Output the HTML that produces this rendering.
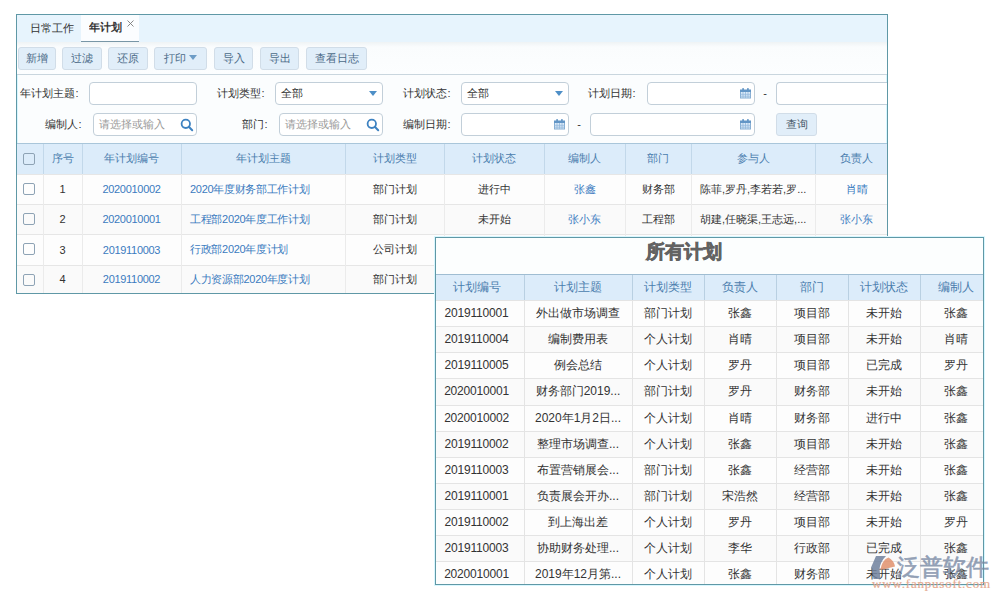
<!DOCTYPE html>
<html><head><meta charset="utf-8">
<style>
*{box-sizing:border-box;margin:0;padding:0}
html,body{width:1000px;height:600px;overflow:hidden;background:#fff;font-family:"Liberation Sans",sans-serif;position:relative}
.a{position:absolute}
.c{position:absolute;display:flex;align-items:center;justify-content:center;white-space:nowrap;overflow:hidden}
.l{justify-content:flex-start}
#p1{left:16px;top:14px;width:872px;height:280px;border:1px solid #5b9bab;background:#f8fcff;overflow:hidden}
.btn{position:absolute;top:47px;height:23px;padding-bottom:1px;border:1px solid #d1dde8;border-radius:3px;background:#e1eef9;color:#4c6b88;font-size:11px;display:flex;align-items:center;justify-content:center}
.lab{position:absolute;font-size:11px;color:#333;white-space:nowrap;display:flex;align-items:center;justify-content:flex-end}
.inp{position:absolute;height:23px;border:1px solid #c2cfd9;border-radius:4px;background:#fff;font-size:11px;color:#333;display:flex;align-items:center;padding-left:5px;white-space:nowrap}
.ph{color:#999}
.hd{font-size:11px;color:#4a7cad}
.bd{font-size:11px;color:#333}
.bl{color:#3b7bbf}
.num{letter-spacing:-0.3px}
.cb{position:absolute;width:12px;height:12px;border:1px solid #8ea3b5;border-radius:2px;background:transparent}
#p2{left:435px;top:237px;width:549px;height:347px;border:1px solid #5b9bab;background:#fff;overflow:hidden}
.h2{font-size:12px;color:#4a7cad}
.b2{font-size:12px;color:#333}
.num2{letter-spacing:-0.2px}
</style></head><body>

<div class="a" style="left:16px;top:14px;width:872px;height:280px;border:1px solid #5f98a6;background:#fbfdfe"></div>
<div class="a" style="left:17px;top:15px;width:870px;height:278px;border:1px solid #d6f6ff"></div>
<div class="a" style="left:17px;top:15px;width:870px;height:27px;background:#e7f4fd"></div>
<div class="c" style="left:17px;top:15px;width:69px;height:26px;font-size:11px;color:#333">日常工作</div>
<div class="a" style="left:81px;top:15px;width:58px;height:27px;background:#fbfdff;border-bottom:1px solid #7896a6"></div>
<div class="c" style="left:89px;top:14px;width:33px;height:26px;font-size:11px;color:#333;font-weight:bold">年计划</div>
<svg class="a" style="left:127px;top:20px" width="7" height="7" viewBox="0 0 7 7"><path d="M0.5 0.5L6.5 6.5M6.5 0.5L0.5 6.5" stroke="#7a7a7a" stroke-width="0.9"/></svg>
<div class="a" style="left:17px;top:42px;width:870px;height:32px;background:linear-gradient(#eff3f5,#fafcfd 5px,#fcfeff)"></div>
<div class="a" style="left:17px;top:74px;width:870px;height:1px;background:#c9d6de"></div>
<div class="btn" style="left:18px;width:38px">新增</div>
<div class="btn" style="left:62px;width:40px">过滤</div>
<div class="btn" style="left:108px;width:40px">还原</div>
<div class="btn" style="left:154px;width:53px;justify-content:flex-start;padding-left:9px">打印<span style="display:inline-block;width:0;height:0;border-left:4px solid transparent;border-right:4px solid transparent;border-top:5px solid #6d9cc6;margin-left:3px;margin-top:-1px"></span></div>
<div class="btn" style="left:214px;width:39px">导入</div>
<div class="btn" style="left:260px;width:39px">导出</div>
<div class="btn" style="left:306px;width:61px">查看日志</div>
<div class="lab" style="left:-21.5px;width:100px;top:81.5px;height:23px">年计划主题:</div>
<div class="inp" style="left:89px;width:108px;top:82px"></div>
<div class="lab" style="left:164.5px;width:100px;top:81.5px;height:23px">计划类型:</div>
<div class="inp" style="left:275px;width:108px;top:82px">全部<span class="a" style="right:5px;top:8px;width:0;height:0;border-left:4px solid transparent;border-right:4px solid transparent;border-top:5px solid #4e8fc7"></span></div>
<div class="lab" style="left:350.5px;width:100px;top:81.5px;height:23px">计划状态:</div>
<div class="inp" style="left:461px;width:108px;top:82px">全部<span class="a" style="right:5px;top:8px;width:0;height:0;border-left:4px solid transparent;border-right:4px solid transparent;border-top:5px solid #4e8fc7"></span></div>
<div class="lab" style="left:535.5px;width:100px;top:81.5px;height:23px">计划日期:</div>
<div class="inp" style="left:647px;width:108px;top:82px"><svg class="a" style="right:3px;top:4px" width="11" height="12" viewBox="0 0 11 12"><rect x="0.5" y="3.5" width="10" height="7.5" fill="#dcebf9" stroke="#86aed3" stroke-width="1"/><rect x="0" y="2.5" width="11" height="2.5" fill="#6396c6"/><rect x="2.2" y="1" width="1.8" height="2.5" rx="0.8" fill="#6396c6"/><rect x="7" y="1" width="1.8" height="2.5" rx="0.8" fill="#6396c6"/><path d="M3 5V11M5.5 5V11M8 5V11M0.5 7.3H10.5M0.5 9.2H10.5" stroke="#94b9dc" stroke-width="0.8"/></svg></div>
<div class="c" style="left:760px;top:81px;width:10px;height:23px;font-size:11px;color:#333">-</div>
<div class="inp" style="left:776px;width:111px;top:82px;border-right:none;border-radius:4px 0 0 4px"></div>
<div class="lab" style="left:-18.5px;width:100px;top:112.5px;height:23px">编制人:</div>
<div class="inp" style="left:93px;width:104px;top:113px"><span class="ph">请选择或输入</span><svg class="a" style="right:2px;top:4px" width="14" height="14" viewBox="0 0 14 14"><circle cx="5.8" cy="5.8" r="4.2" fill="none" stroke="#3d82c1" stroke-width="1.8"/><line x1="8.8" y1="8.8" x2="12.2" y2="12.2" stroke="#3d82c1" stroke-width="2" stroke-linecap="round"/></svg></div>
<div class="lab" style="left:167.5px;width:100px;top:112.5px;height:23px">部门:</div>
<div class="inp" style="left:279px;width:104px;top:113px"><span class="ph">请选择或输入</span><svg class="a" style="right:2px;top:4px" width="14" height="14" viewBox="0 0 14 14"><circle cx="5.8" cy="5.8" r="4.2" fill="none" stroke="#3d82c1" stroke-width="1.8"/><line x1="8.8" y1="8.8" x2="12.2" y2="12.2" stroke="#3d82c1" stroke-width="2" stroke-linecap="round"/></svg></div>
<div class="lab" style="left:350.5px;width:100px;top:112.5px;height:23px">编制日期:</div>
<div class="inp" style="left:461px;width:108px;top:113px"><svg class="a" style="right:3px;top:4px" width="11" height="12" viewBox="0 0 11 12"><rect x="0.5" y="3.5" width="10" height="7.5" fill="#dcebf9" stroke="#86aed3" stroke-width="1"/><rect x="0" y="2.5" width="11" height="2.5" fill="#6396c6"/><rect x="2.2" y="1" width="1.8" height="2.5" rx="0.8" fill="#6396c6"/><rect x="7" y="1" width="1.8" height="2.5" rx="0.8" fill="#6396c6"/><path d="M3 5V11M5.5 5V11M8 5V11M0.5 7.3H10.5M0.5 9.2H10.5" stroke="#94b9dc" stroke-width="0.8"/></svg></div>
<div class="c" style="left:574px;top:112px;width:10px;height:23px;font-size:11px;color:#333">-</div>
<div class="inp" style="left:590px;width:165px;top:113px"><svg class="a" style="right:3px;top:4px" width="11" height="12" viewBox="0 0 11 12"><rect x="0.5" y="3.5" width="10" height="7.5" fill="#dcebf9" stroke="#86aed3" stroke-width="1"/><rect x="0" y="2.5" width="11" height="2.5" fill="#6396c6"/><rect x="2.2" y="1" width="1.8" height="2.5" rx="0.8" fill="#6396c6"/><rect x="7" y="1" width="1.8" height="2.5" rx="0.8" fill="#6396c6"/><path d="M3 5V11M5.5 5V11M8 5V11M0.5 7.3H10.5M0.5 9.2H10.5" stroke="#94b9dc" stroke-width="0.8"/></svg></div>
<div class="btn" style="left:776px;top:113px;width:41px;height:23px;color:#485868">查询</div>
<div class="a" style="left:17px;top:143px;width:870px;height:31px;background:#dcecfa;border-top:1px solid #a9c6da"></div>
<div class="a" style="left:43px;top:144px;width:1px;height:30px;background:#c2d8ea"></div>
<div class="a" style="left:82px;top:144px;width:1px;height:30px;background:#c2d8ea"></div>
<div class="a" style="left:181px;top:144px;width:1px;height:30px;background:#c2d8ea"></div>
<div class="a" style="left:345px;top:144px;width:1px;height:30px;background:#c2d8ea"></div>
<div class="a" style="left:444px;top:144px;width:1px;height:30px;background:#c2d8ea"></div>
<div class="a" style="left:544px;top:144px;width:1px;height:30px;background:#c2d8ea"></div>
<div class="a" style="left:625px;top:144px;width:1px;height:30px;background:#c2d8ea"></div>
<div class="a" style="left:691px;top:144px;width:1px;height:30px;background:#c2d8ea"></div>
<div class="a" style="left:815px;top:144px;width:1px;height:30px;background:#c2d8ea"></div>
<div class="cb" style="left:23px;top:153px"></div>
<div class="c hd" style="left:43px;top:143px;width:39px;height:30px">序号</div>
<div class="c hd" style="left:82px;top:143px;width:99px;height:30px">年计划编号</div>
<div class="c hd" style="left:181px;top:143px;width:164px;height:30px">年计划主题</div>
<div class="c hd" style="left:345px;top:143px;width:99px;height:30px">计划类型</div>
<div class="c hd" style="left:444px;top:143px;width:100px;height:30px">计划状态</div>
<div class="c hd" style="left:544px;top:143px;width:81px;height:30px">编制人</div>
<div class="c hd" style="left:625px;top:143px;width:66px;height:30px">部门</div>
<div class="c hd" style="left:691px;top:143px;width:124px;height:30px">参与人</div>
<div class="c hd" style="left:815px;top:143px;width:83px;height:30px">负责人</div>
<div class="a" style="left:17px;top:174px;width:870px;height:30px;background:#fdfdfd;border-top:1px solid #e6e6e6"></div>
<div class="a" style="left:43px;top:174px;width:1px;height:30px;background:#ebebeb"></div>
<div class="a" style="left:82px;top:174px;width:1px;height:30px;background:#ebebeb"></div>
<div class="a" style="left:181px;top:174px;width:1px;height:30px;background:#ebebeb"></div>
<div class="a" style="left:345px;top:174px;width:1px;height:30px;background:#ebebeb"></div>
<div class="a" style="left:444px;top:174px;width:1px;height:30px;background:#ebebeb"></div>
<div class="a" style="left:544px;top:174px;width:1px;height:30px;background:#ebebeb"></div>
<div class="a" style="left:625px;top:174px;width:1px;height:30px;background:#ebebeb"></div>
<div class="a" style="left:691px;top:174px;width:1px;height:30px;background:#ebebeb"></div>
<div class="a" style="left:815px;top:174px;width:1px;height:30px;background:#ebebeb"></div>
<div class="cb" style="left:23px;top:183px"></div>
<div class="c bd num" style="left:43px;top:174px;width:39px;height:30px;">1</div>
<div class="c bd bl num" style="left:82px;top:174px;width:99px;height:30px;">2020010002</div>
<div class="c bd bl num l" style="left:181px;top:174px;width:164px;height:30px;padding-left:9px;">2020年度财务部工作计划</div>
<div class="c bd" style="left:345px;top:174px;width:99px;height:30px;">部门计划</div>
<div class="c bd" style="left:444px;top:174px;width:100px;height:30px;">进行中</div>
<div class="c bd bl" style="left:544px;top:174px;width:81px;height:30px;">张鑫</div>
<div class="c bd" style="left:625px;top:174px;width:66px;height:30px;">财务部</div>
<div class="c bd l" style="left:691px;top:174px;width:124px;height:30px;padding-left:9px;">陈菲,罗丹,李若若,罗...</div>
<div class="c bd bl" style="left:815px;top:174px;width:83px;height:30px;">肖晴</div>
<div class="a" style="left:17px;top:204px;width:870px;height:30px;background:#fafafa;border-top:1px solid #e6e6e6"></div>
<div class="a" style="left:43px;top:204px;width:1px;height:30px;background:#ebebeb"></div>
<div class="a" style="left:82px;top:204px;width:1px;height:30px;background:#ebebeb"></div>
<div class="a" style="left:181px;top:204px;width:1px;height:30px;background:#ebebeb"></div>
<div class="a" style="left:345px;top:204px;width:1px;height:30px;background:#ebebeb"></div>
<div class="a" style="left:444px;top:204px;width:1px;height:30px;background:#ebebeb"></div>
<div class="a" style="left:544px;top:204px;width:1px;height:30px;background:#ebebeb"></div>
<div class="a" style="left:625px;top:204px;width:1px;height:30px;background:#ebebeb"></div>
<div class="a" style="left:691px;top:204px;width:1px;height:30px;background:#ebebeb"></div>
<div class="a" style="left:815px;top:204px;width:1px;height:30px;background:#ebebeb"></div>
<div class="cb" style="left:23px;top:213px"></div>
<div class="c bd num" style="left:43px;top:204px;width:39px;height:30px;">2</div>
<div class="c bd bl num" style="left:82px;top:204px;width:99px;height:30px;">2020010001</div>
<div class="c bd bl num l" style="left:181px;top:204px;width:164px;height:30px;padding-left:9px;">工程部2020年度工作计划</div>
<div class="c bd" style="left:345px;top:204px;width:99px;height:30px;">部门计划</div>
<div class="c bd" style="left:444px;top:204px;width:100px;height:30px;">未开始</div>
<div class="c bd bl" style="left:544px;top:204px;width:81px;height:30px;">张小东</div>
<div class="c bd" style="left:625px;top:204px;width:66px;height:30px;">工程部</div>
<div class="c bd l" style="left:691px;top:204px;width:124px;height:30px;padding-left:9px;">胡建,任晓渠,王志远,...</div>
<div class="c bd bl" style="left:815px;top:204px;width:83px;height:30px;">张小东</div>
<div class="a" style="left:17px;top:234px;width:870px;height:31px;background:#fdfdfd;border-top:1px solid #e6e6e6"></div>
<div class="a" style="left:43px;top:234px;width:1px;height:31px;background:#ebebeb"></div>
<div class="a" style="left:82px;top:234px;width:1px;height:31px;background:#ebebeb"></div>
<div class="a" style="left:181px;top:234px;width:1px;height:31px;background:#ebebeb"></div>
<div class="a" style="left:345px;top:234px;width:1px;height:31px;background:#ebebeb"></div>
<div class="a" style="left:444px;top:234px;width:1px;height:31px;background:#ebebeb"></div>
<div class="a" style="left:544px;top:234px;width:1px;height:31px;background:#ebebeb"></div>
<div class="a" style="left:625px;top:234px;width:1px;height:31px;background:#ebebeb"></div>
<div class="a" style="left:691px;top:234px;width:1px;height:31px;background:#ebebeb"></div>
<div class="a" style="left:815px;top:234px;width:1px;height:31px;background:#ebebeb"></div>
<div class="cb" style="left:23px;top:243px"></div>
<div class="c bd num" style="left:43px;top:234px;width:39px;height:31px;">3</div>
<div class="c bd bl num" style="left:82px;top:234px;width:99px;height:31px;">2019110003</div>
<div class="c bd bl num l" style="left:181px;top:234px;width:164px;height:31px;padding-left:9px;">行政部2020年度计划</div>
<div class="c bd" style="left:345px;top:234px;width:99px;height:31px;">公司计划</div>
<div class="a" style="left:17px;top:265px;width:870px;height:28px;background:#fafafa;border-top:1px solid #e6e6e6"></div>
<div class="a" style="left:43px;top:265px;width:1px;height:28px;background:#ebebeb"></div>
<div class="a" style="left:82px;top:265px;width:1px;height:28px;background:#ebebeb"></div>
<div class="a" style="left:181px;top:265px;width:1px;height:28px;background:#ebebeb"></div>
<div class="a" style="left:345px;top:265px;width:1px;height:28px;background:#ebebeb"></div>
<div class="a" style="left:444px;top:265px;width:1px;height:28px;background:#ebebeb"></div>
<div class="a" style="left:544px;top:265px;width:1px;height:28px;background:#ebebeb"></div>
<div class="a" style="left:625px;top:265px;width:1px;height:28px;background:#ebebeb"></div>
<div class="a" style="left:691px;top:265px;width:1px;height:28px;background:#ebebeb"></div>
<div class="a" style="left:815px;top:265px;width:1px;height:28px;background:#ebebeb"></div>
<div class="cb" style="left:23px;top:274px"></div>
<div class="c bd num" style="left:43px;top:265px;width:39px;height:28px;">4</div>
<div class="c bd bl num" style="left:82px;top:265px;width:99px;height:28px;">2019110002</div>
<div class="c bd bl num l" style="left:181px;top:265px;width:164px;height:28px;padding-left:9px;">人力资源部2020年度计划</div>
<div class="c bd" style="left:345px;top:265px;width:99px;height:28px;">部门计划</div>
<div class="a" style="left:434px;top:236px;width:551px;height:350px;border:1px solid #d9f7ff"></div>
<div class="a" style="left:435px;top:237px;width:549px;height:348px;border:1px solid #5f98a6;background:#fcfefe"></div>
<div class="a" style="left:646px;top:239px;height:36px;font-size:19px;font-weight:bold;color:#636363;-webkit-text-stroke:0.7px #636363;display:flex;align-items:center;white-space:nowrap;padding-bottom:10px">所有计划</div>
<div class="a" style="left:436px;top:274px;width:547px;height:27px;background:#dcecfa;border-top:1px solid #9fbdd2;border-bottom:1px solid #bcd3e3"></div>
<div class="a" style="left:524px;top:275px;width:1px;height:25px;background:#b9d0e2"></div>
<div class="a" style="left:632px;top:275px;width:1px;height:25px;background:#b9d0e2"></div>
<div class="a" style="left:704px;top:275px;width:1px;height:25px;background:#b9d0e2"></div>
<div class="a" style="left:776px;top:275px;width:1px;height:25px;background:#b9d0e2"></div>
<div class="a" style="left:848px;top:275px;width:1px;height:25px;background:#b9d0e2"></div>
<div class="a" style="left:920px;top:275px;width:1px;height:25px;background:#b9d0e2"></div>
<div class="c h2" style="left:435px;top:274px;width:83px;height:26px">计划编号</div>
<div class="c h2" style="left:524px;top:274px;width:108px;height:26px">计划主题</div>
<div class="c h2" style="left:632px;top:274px;width:72px;height:26px">计划类型</div>
<div class="c h2" style="left:704px;top:274px;width:72px;height:26px">负责人</div>
<div class="c h2" style="left:776px;top:274px;width:72px;height:26px">部门</div>
<div class="c h2" style="left:848px;top:274px;width:72px;height:26px">计划状态</div>
<div class="c h2" style="left:920px;top:274px;width:71px;height:26px">编制人</div>
<div class="a" style="left:436px;top:300px;width:547px;height:26px;background:#fdfdfd;border-top:1px solid #e4e4e4"></div>
<div class="a" style="left:524px;top:300px;width:1px;height:26px;background:#e4e4e4"></div>
<div class="a" style="left:632px;top:300px;width:1px;height:26px;background:#e4e4e4"></div>
<div class="a" style="left:704px;top:300px;width:1px;height:26px;background:#e4e4e4"></div>
<div class="a" style="left:776px;top:300px;width:1px;height:26px;background:#e4e4e4"></div>
<div class="a" style="left:848px;top:300px;width:1px;height:26px;background:#e4e4e4"></div>
<div class="a" style="left:920px;top:300px;width:1px;height:26px;background:#e4e4e4"></div>
<div class="c b2 num2" style="left:435px;top:300px;width:83px;height:26px">2019110001</div>
<div class="c b2" style="left:524px;top:300px;width:108px;height:26px">外出做市场调查</div>
<div class="c b2" style="left:632px;top:300px;width:72px;height:26px">部门计划</div>
<div class="c b2" style="left:704px;top:300px;width:72px;height:26px">张鑫</div>
<div class="c b2" style="left:776px;top:300px;width:72px;height:26px">项目部</div>
<div class="c b2" style="left:848px;top:300px;width:72px;height:26px">未开始</div>
<div class="c b2" style="left:920px;top:300px;width:71px;height:26px">张鑫</div>
<div class="a" style="left:436px;top:326px;width:547px;height:26px;background:#fafafa;border-top:1px solid #e4e4e4"></div>
<div class="a" style="left:524px;top:326px;width:1px;height:26px;background:#e4e4e4"></div>
<div class="a" style="left:632px;top:326px;width:1px;height:26px;background:#e4e4e4"></div>
<div class="a" style="left:704px;top:326px;width:1px;height:26px;background:#e4e4e4"></div>
<div class="a" style="left:776px;top:326px;width:1px;height:26px;background:#e4e4e4"></div>
<div class="a" style="left:848px;top:326px;width:1px;height:26px;background:#e4e4e4"></div>
<div class="a" style="left:920px;top:326px;width:1px;height:26px;background:#e4e4e4"></div>
<div class="c b2 num2" style="left:435px;top:326px;width:83px;height:26px">2019110004</div>
<div class="c b2" style="left:524px;top:326px;width:108px;height:26px">编制费用表</div>
<div class="c b2" style="left:632px;top:326px;width:72px;height:26px">个人计划</div>
<div class="c b2" style="left:704px;top:326px;width:72px;height:26px">肖晴</div>
<div class="c b2" style="left:776px;top:326px;width:72px;height:26px">项目部</div>
<div class="c b2" style="left:848px;top:326px;width:72px;height:26px">未开始</div>
<div class="c b2" style="left:920px;top:326px;width:71px;height:26px">肖晴</div>
<div class="a" style="left:436px;top:352px;width:547px;height:26px;background:#fdfdfd;border-top:1px solid #e4e4e4"></div>
<div class="a" style="left:524px;top:352px;width:1px;height:26px;background:#e4e4e4"></div>
<div class="a" style="left:632px;top:352px;width:1px;height:26px;background:#e4e4e4"></div>
<div class="a" style="left:704px;top:352px;width:1px;height:26px;background:#e4e4e4"></div>
<div class="a" style="left:776px;top:352px;width:1px;height:26px;background:#e4e4e4"></div>
<div class="a" style="left:848px;top:352px;width:1px;height:26px;background:#e4e4e4"></div>
<div class="a" style="left:920px;top:352px;width:1px;height:26px;background:#e4e4e4"></div>
<div class="c b2 num2" style="left:435px;top:352px;width:83px;height:26px">2019110005</div>
<div class="c b2" style="left:524px;top:352px;width:108px;height:26px">例会总结</div>
<div class="c b2" style="left:632px;top:352px;width:72px;height:26px">个人计划</div>
<div class="c b2" style="left:704px;top:352px;width:72px;height:26px">罗丹</div>
<div class="c b2" style="left:776px;top:352px;width:72px;height:26px">项目部</div>
<div class="c b2" style="left:848px;top:352px;width:72px;height:26px">已完成</div>
<div class="c b2" style="left:920px;top:352px;width:71px;height:26px">罗丹</div>
<div class="a" style="left:436px;top:378px;width:547px;height:27px;background:#fafafa;border-top:1px solid #e4e4e4"></div>
<div class="a" style="left:524px;top:378px;width:1px;height:27px;background:#e4e4e4"></div>
<div class="a" style="left:632px;top:378px;width:1px;height:27px;background:#e4e4e4"></div>
<div class="a" style="left:704px;top:378px;width:1px;height:27px;background:#e4e4e4"></div>
<div class="a" style="left:776px;top:378px;width:1px;height:27px;background:#e4e4e4"></div>
<div class="a" style="left:848px;top:378px;width:1px;height:27px;background:#e4e4e4"></div>
<div class="a" style="left:920px;top:378px;width:1px;height:27px;background:#e4e4e4"></div>
<div class="c b2 num2" style="left:435px;top:378px;width:83px;height:26px">2020010001</div>
<div class="c b2" style="left:524px;top:378px;width:108px;height:26px">财务部门2019...</div>
<div class="c b2" style="left:632px;top:378px;width:72px;height:26px">部门计划</div>
<div class="c b2" style="left:704px;top:378px;width:72px;height:26px">罗丹</div>
<div class="c b2" style="left:776px;top:378px;width:72px;height:26px">财务部</div>
<div class="c b2" style="left:848px;top:378px;width:72px;height:26px">未开始</div>
<div class="c b2" style="left:920px;top:378px;width:71px;height:26px">张鑫</div>
<div class="a" style="left:436px;top:405px;width:547px;height:26px;background:#fdfdfd;border-top:1px solid #e4e4e4"></div>
<div class="a" style="left:524px;top:405px;width:1px;height:26px;background:#e4e4e4"></div>
<div class="a" style="left:632px;top:405px;width:1px;height:26px;background:#e4e4e4"></div>
<div class="a" style="left:704px;top:405px;width:1px;height:26px;background:#e4e4e4"></div>
<div class="a" style="left:776px;top:405px;width:1px;height:26px;background:#e4e4e4"></div>
<div class="a" style="left:848px;top:405px;width:1px;height:26px;background:#e4e4e4"></div>
<div class="a" style="left:920px;top:405px;width:1px;height:26px;background:#e4e4e4"></div>
<div class="c b2 num2" style="left:435px;top:405px;width:83px;height:26px">2020010002</div>
<div class="c b2" style="left:524px;top:405px;width:108px;height:26px">2020年1月2日...</div>
<div class="c b2" style="left:632px;top:405px;width:72px;height:26px">个人计划</div>
<div class="c b2" style="left:704px;top:405px;width:72px;height:26px">肖晴</div>
<div class="c b2" style="left:776px;top:405px;width:72px;height:26px">财务部</div>
<div class="c b2" style="left:848px;top:405px;width:72px;height:26px">进行中</div>
<div class="c b2" style="left:920px;top:405px;width:71px;height:26px">张鑫</div>
<div class="a" style="left:436px;top:431px;width:547px;height:26px;background:#fafafa;border-top:1px solid #e4e4e4"></div>
<div class="a" style="left:524px;top:431px;width:1px;height:26px;background:#e4e4e4"></div>
<div class="a" style="left:632px;top:431px;width:1px;height:26px;background:#e4e4e4"></div>
<div class="a" style="left:704px;top:431px;width:1px;height:26px;background:#e4e4e4"></div>
<div class="a" style="left:776px;top:431px;width:1px;height:26px;background:#e4e4e4"></div>
<div class="a" style="left:848px;top:431px;width:1px;height:26px;background:#e4e4e4"></div>
<div class="a" style="left:920px;top:431px;width:1px;height:26px;background:#e4e4e4"></div>
<div class="c b2 num2" style="left:435px;top:431px;width:83px;height:26px">2019110002</div>
<div class="c b2" style="left:524px;top:431px;width:108px;height:26px">整理市场调查...</div>
<div class="c b2" style="left:632px;top:431px;width:72px;height:26px">个人计划</div>
<div class="c b2" style="left:704px;top:431px;width:72px;height:26px">张鑫</div>
<div class="c b2" style="left:776px;top:431px;width:72px;height:26px">项目部</div>
<div class="c b2" style="left:848px;top:431px;width:72px;height:26px">未开始</div>
<div class="c b2" style="left:920px;top:431px;width:71px;height:26px">张鑫</div>
<div class="a" style="left:436px;top:457px;width:547px;height:26px;background:#fdfdfd;border-top:1px solid #e4e4e4"></div>
<div class="a" style="left:524px;top:457px;width:1px;height:26px;background:#e4e4e4"></div>
<div class="a" style="left:632px;top:457px;width:1px;height:26px;background:#e4e4e4"></div>
<div class="a" style="left:704px;top:457px;width:1px;height:26px;background:#e4e4e4"></div>
<div class="a" style="left:776px;top:457px;width:1px;height:26px;background:#e4e4e4"></div>
<div class="a" style="left:848px;top:457px;width:1px;height:26px;background:#e4e4e4"></div>
<div class="a" style="left:920px;top:457px;width:1px;height:26px;background:#e4e4e4"></div>
<div class="c b2 num2" style="left:435px;top:457px;width:83px;height:26px">2019110003</div>
<div class="c b2" style="left:524px;top:457px;width:108px;height:26px">布置营销展会...</div>
<div class="c b2" style="left:632px;top:457px;width:72px;height:26px">部门计划</div>
<div class="c b2" style="left:704px;top:457px;width:72px;height:26px">张鑫</div>
<div class="c b2" style="left:776px;top:457px;width:72px;height:26px">经营部</div>
<div class="c b2" style="left:848px;top:457px;width:72px;height:26px">未开始</div>
<div class="c b2" style="left:920px;top:457px;width:71px;height:26px">张鑫</div>
<div class="a" style="left:436px;top:483px;width:547px;height:26px;background:#fafafa;border-top:1px solid #e4e4e4"></div>
<div class="a" style="left:524px;top:483px;width:1px;height:26px;background:#e4e4e4"></div>
<div class="a" style="left:632px;top:483px;width:1px;height:26px;background:#e4e4e4"></div>
<div class="a" style="left:704px;top:483px;width:1px;height:26px;background:#e4e4e4"></div>
<div class="a" style="left:776px;top:483px;width:1px;height:26px;background:#e4e4e4"></div>
<div class="a" style="left:848px;top:483px;width:1px;height:26px;background:#e4e4e4"></div>
<div class="a" style="left:920px;top:483px;width:1px;height:26px;background:#e4e4e4"></div>
<div class="c b2 num2" style="left:435px;top:483px;width:83px;height:26px">2019110001</div>
<div class="c b2" style="left:524px;top:483px;width:108px;height:26px">负责展会开办...</div>
<div class="c b2" style="left:632px;top:483px;width:72px;height:26px">部门计划</div>
<div class="c b2" style="left:704px;top:483px;width:72px;height:26px">宋浩然</div>
<div class="c b2" style="left:776px;top:483px;width:72px;height:26px">经营部</div>
<div class="c b2" style="left:848px;top:483px;width:72px;height:26px">未开始</div>
<div class="c b2" style="left:920px;top:483px;width:71px;height:26px">张鑫</div>
<div class="a" style="left:436px;top:509px;width:547px;height:26px;background:#fdfdfd;border-top:1px solid #e4e4e4"></div>
<div class="a" style="left:524px;top:509px;width:1px;height:26px;background:#e4e4e4"></div>
<div class="a" style="left:632px;top:509px;width:1px;height:26px;background:#e4e4e4"></div>
<div class="a" style="left:704px;top:509px;width:1px;height:26px;background:#e4e4e4"></div>
<div class="a" style="left:776px;top:509px;width:1px;height:26px;background:#e4e4e4"></div>
<div class="a" style="left:848px;top:509px;width:1px;height:26px;background:#e4e4e4"></div>
<div class="a" style="left:920px;top:509px;width:1px;height:26px;background:#e4e4e4"></div>
<div class="c b2 num2" style="left:435px;top:509px;width:83px;height:26px">2019110002</div>
<div class="c b2" style="left:524px;top:509px;width:108px;height:26px">到上海出差</div>
<div class="c b2" style="left:632px;top:509px;width:72px;height:26px">个人计划</div>
<div class="c b2" style="left:704px;top:509px;width:72px;height:26px">罗丹</div>
<div class="c b2" style="left:776px;top:509px;width:72px;height:26px">项目部</div>
<div class="c b2" style="left:848px;top:509px;width:72px;height:26px">未开始</div>
<div class="c b2" style="left:920px;top:509px;width:71px;height:26px">罗丹</div>
<div class="a" style="left:436px;top:535px;width:547px;height:26px;background:#fafafa;border-top:1px solid #e4e4e4"></div>
<div class="a" style="left:524px;top:535px;width:1px;height:26px;background:#e4e4e4"></div>
<div class="a" style="left:632px;top:535px;width:1px;height:26px;background:#e4e4e4"></div>
<div class="a" style="left:704px;top:535px;width:1px;height:26px;background:#e4e4e4"></div>
<div class="a" style="left:776px;top:535px;width:1px;height:26px;background:#e4e4e4"></div>
<div class="a" style="left:848px;top:535px;width:1px;height:26px;background:#e4e4e4"></div>
<div class="a" style="left:920px;top:535px;width:1px;height:26px;background:#e4e4e4"></div>
<div class="c b2 num2" style="left:435px;top:535px;width:83px;height:26px">2019110003</div>
<div class="c b2" style="left:524px;top:535px;width:108px;height:26px">协助财务处理...</div>
<div class="c b2" style="left:632px;top:535px;width:72px;height:26px">个人计划</div>
<div class="c b2" style="left:704px;top:535px;width:72px;height:26px">李华</div>
<div class="c b2" style="left:776px;top:535px;width:72px;height:26px">行政部</div>
<div class="c b2" style="left:848px;top:535px;width:72px;height:26px">已完成</div>
<div class="c b2" style="left:920px;top:535px;width:71px;height:26px">张鑫</div>
<div class="a" style="left:436px;top:561px;width:547px;height:23px;background:#fdfdfd;border-top:1px solid #e4e4e4"></div>
<div class="a" style="left:524px;top:561px;width:1px;height:23px;background:#e4e4e4"></div>
<div class="a" style="left:632px;top:561px;width:1px;height:23px;background:#e4e4e4"></div>
<div class="a" style="left:704px;top:561px;width:1px;height:23px;background:#e4e4e4"></div>
<div class="a" style="left:776px;top:561px;width:1px;height:23px;background:#e4e4e4"></div>
<div class="a" style="left:848px;top:561px;width:1px;height:23px;background:#e4e4e4"></div>
<div class="a" style="left:920px;top:561px;width:1px;height:23px;background:#e4e4e4"></div>
<div class="c b2 num2" style="left:435px;top:561px;width:83px;height:26px">2020010001</div>
<div class="c b2" style="left:524px;top:561px;width:108px;height:26px">2019年12月第...</div>
<div class="c b2" style="left:632px;top:561px;width:72px;height:26px">个人计划</div>
<div class="c b2" style="left:704px;top:561px;width:72px;height:26px">张鑫</div>
<div class="c b2" style="left:776px;top:561px;width:72px;height:26px">财务部</div>
<div class="c b2" style="left:848px;top:561px;width:72px;height:26px">未开始</div>
<div class="c b2" style="left:920px;top:561px;width:71px;height:26px">张鑫</div>
<svg class="a" style="left:868px;top:552px" width="30" height="30" viewBox="0 0 30 30"><path d="M8 4 L18 4 C14 8 12 12 11.5 17 L12.5 27 L5.5 27 L3 15.5 Z" fill="#6f809c" opacity="0.85"/><path d="M12.5 18 C13.5 11 16.5 7 20.5 5.5 C24 7.5 26.5 10.5 27 14.5 Z" fill="#e0906c" opacity="0.85"/></svg>
<div class="a" style="left:897px;top:553px;font-size:23px;line-height:28px;color:#7586a2;opacity:0.78;white-space:nowrap;-webkit-text-stroke:0.6px #7586a2;letter-spacing:0px">泛普软件</div>
<div class="a" style="left:872px;top:577px;font-family:'Liberation Serif',serif;font-size:13px;line-height:14px;color:#e3a286;opacity:0.9;white-space:nowrap;letter-spacing:0.8px;-webkit-text-stroke:0.2px #e3a286">www.fanpusoft.com</div>
</body></html>
